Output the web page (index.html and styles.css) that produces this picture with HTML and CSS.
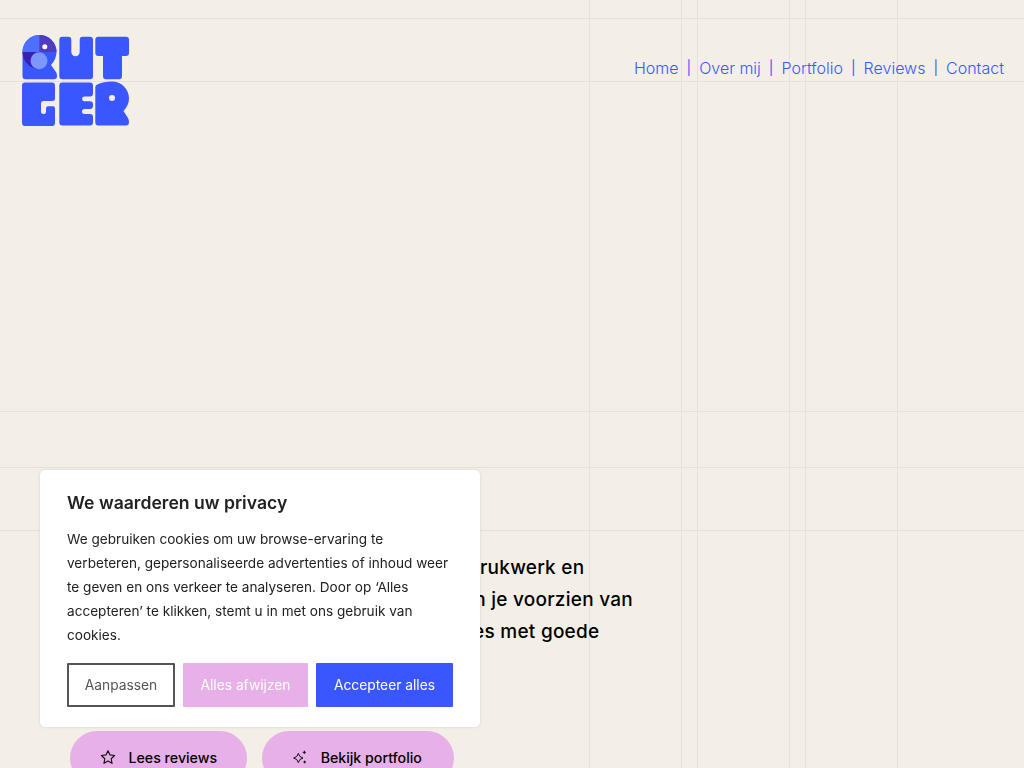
FILE: index.html
```html
<!DOCTYPE html>
<html lang="nl">
<head>
    <meta charset="UTF-8">
    <meta name="viewport" content="width=device-width, initial-scale=1.0">
    <title>Rutger</title>
    <link rel="stylesheet" href="styles.css">
</head>
<body>
    <!-- grid lines behind the page -->
    <svg class="grid-lines" width="1024" height="768" viewBox="0 0 1024 768">
        <path d="M589.5 0V768M681.5 0V768M697.5 0V768M789.5 0V768M805.5 0V768M897.5 0V768M0 18.5H1024M0 81.5H1024M0 411.5H1024M0 467.5H1024M0 530.5H1024" stroke="#e6e2da" fill="none"/>
    </svg>

    <header class="site-header">
        <a class="logo" href="#" aria-label="Rutger">
            <svg width="108" height="91" viewBox="22 35 108 91">
                <g fill="#3a57ff">
                    <path d="M22.500 52a17 17 0 0 1 34 0q0 7-5.500 13l5 7q1 2 1 4 0 3.300-3 3.300H25.500q-3 0-3-3z"/>
                    <path d="M62.300 36.700h6q3 0 3 3V52a4.200 4.200 0 0 0 8.400 0V39.700q0-3 3-3h7.300q3 0 3 3v36.600q0 3-3 3H62.300q-3 0-3-3V39.700q0-3 3-3z"/>
                    <path d="M98.300 36.700H126q3 0 3 3V53q0 3-3 3h-4v20.300q0 3-3 3h-13q-3 0-3-3V56h-4.700q-3 0-3-3V39.700q0-3 3-3z"/>
                    <path d="M25 82.500h27q3 0 3 3V98.500q0 2.500-3 2.500H43.500q-2.500 0-2.500 2.500v8a2.500 2.500 0 0 0 5 0v-3q0-2.200 2-2.200h5q2 0 2 2.200v14.600q0 3-3 3H25q-3 0-3-3V85.500q0-3 3-3z"/>
                    <path d="M62.300 82.500H90q3 0 3 3v8q0 3-3 3h-5.500a2.400 2.400 0 0 0 0 4.800H90q3 0 3 3v1.700q0 3-3 3h-5.500a2.500 2.500 0 0 0 0 5H90q3 0 3 3v5.600q0 3-3 3H62.300q-3 0-3-3V85.500q0-3 3-3z"/>
                    <path d="M98.300 84q5-2.500 13.700-2.500a17 17 0 0 1 17 17q0 6.500-5.500 12.500l4.500 7q1 2 1 4 0 3.600-3 3.600H98.300q-3 0-3-3V87q0-2 3-3z"/>
                </g>
                <path d="M39.500 35a17 17 0 0 0-17 17h17z" fill="#4d70ff"/>
                <path d="M39.500 35a17 17 0 0 1 17 17h-17z" fill="#4f3bc4"/>
                <path d="M22.500 52h17v17a17 17 0 0 1-17-17z" fill="#3b1fb5"/>
                <circle cx="39" cy="60.800" r="8.500" fill="#7d97ff"/>
                <circle cx="44.800" cy="46.700" r="2.500" fill="#fff"/>
                <circle cx="112" cy="98" r="3" fill="#f3efe7"/>
            </svg>
        </a>
        <nav class="main-nav">
            <a href="#">Home</a><span>|</span>
            <a href="#">Over mij</a><span>|</span>
            <a href="#">Portfolio</a><span>|</span>
            <a href="#">Reviews</a><span>|</span>
            <a href="#">Contact</a>
        </nav>
    </header>

    <main class="hero">
        <p class="hero-text">Ik maak logo's, huisstijlen, flyers, of ander drukwerk en<br>websites. Verder denk ik met jou mee en kan je voorzien van<br>teksten en vette ideeën voor nieuwe websites met goede</p>
        <div class="hero-buttons">
            <a class="pill" href="#">
                <svg width="16" height="16" viewBox="0 0 24 24" fill="none" stroke="#111" stroke-width="1.700" stroke-linejoin="round"><path d="M12 2.500l3 6.400 6.900.9-5.100 4.800 1.300 6.900-6.100-3.400-6.100 3.400 1.300-6.900-5.100-4.800 6.900-.9z"/></svg>
                Lees reviews
            </a>
            <a class="pill pill-portfolio" href="#">
                <svg width="16" height="16" viewBox="0 0 24 24" fill="none" stroke="#111" stroke-width="1.500" stroke-linejoin="round"><path d="M9.500 6.500l2.300 4.700 4.700 2.300-4.700 2.300-2.300 4.700-2.300-4.700-4.700-2.300 4.700-2.300z"/><path d="M18.500 2.500v5M16 5h5M19 17.500v4M17 19.500h4"/></svg>
                Bekijk portfolio
            </a>
        </div>
    </main>

    <div class="cookie-box">
        <h2>We waarderen uw privacy</h2>
        <p>We gebruiken cookies om uw browse-ervaring te verbeteren, gepersonaliseerde advertenties of inhoud weer te geven en ons verkeer te analyseren. Door op ‘Alles accepteren’ te klikken, stemt u in met ons gebruik van cookies.</p>
        <div class="cookie-actions">
            <button class="btn-outline" type="button">Aanpassen</button>
            <button class="btn-pink" type="button">Alles afwijzen</button>
            <button class="btn-blue" type="button">Accepteer alles</button>
        </div>
    </div>
</body>
</html>
```

FILE: styles.css
```css
* {
    box-sizing: border-box;
}

html, body {
    height: 100%;
    overflow: hidden;
}

body {
    margin: 0;
    background-color: #f3efe7;
    font-family: "Inter", "Liberation Sans", sans-serif;
    color: #000;
}

a {
    text-decoration: none;
}

.grid-lines {
    position: absolute;
    top: 0;
    left: 0;
}

.site-header {
    position: relative;
    display: flex;
    justify-content: space-between;
    align-items: flex-start;
    padding: 35px 20px 0 22px;
}

.logo {
    display: block;
    height: 91px;
}

.logo svg {
    display: block;
}

.main-nav {
    display: flex;
    gap: 7.5px;
    margin-top: 21px;
    font-size: 16px;
    font-weight: 350;
    line-height: 24px;
    color: #3a57ff;
}

.main-nav a {
    color: #3a57ff;
}

.main-nav span {
    font-size: 14px;
    font-weight: 400;
    padding: 0 0.5px;
}

.hero {
    position: relative;
    padding: 426px 0 0 70px;
}

.hero-text {
    margin: 0;
    font-size: 19px;
    font-weight: 500;
    line-height: 32px;
    letter-spacing: 0.25px;
}

.hero-buttons {
    display: flex;
    gap: 15px;
    margin-top: 83px;
}

.pill {
    display: flex;
    align-items: center;
    gap: 13px;
    height: 54px;
    padding: 0 29.5px 2px;
    border-radius: 27px;
    background-color: #e7b0e8;
    color: #000;
    font-size: 14.2px;
    font-weight: 500;
}

.pill-portfolio {
    padding: 0 32px 2px 30px;
}

.cookie-box {
    position: fixed;
    left: 40px;
    top: 470px;
    width: 440px;
    height: 257px;
    padding: 22px 27px;
    background-color: #fff;
    border-radius: 5px;
    box-shadow: 0 0 3px rgba(0, 0, 0, 0.12);
    color: #212121;
}

.cookie-box h2 {
    margin: 0;
    font-size: 17.6px;
    font-weight: 600;
    line-height: 22px;
}

.cookie-box p {
    margin: 13px 0 0;
    font-size: 13.6px;
    line-height: 24px;
}

.cookie-actions {
    display: flex;
    gap: 8px;
    margin-top: 16px;
}

.cookie-actions button {
    height: 44px;
    border-radius: 1px;
    border: 2px solid transparent;
    font-family: inherit;
    font-size: 13.8px;
    cursor: pointer;
}

.cookie-actions .btn-outline {
    width: 108px;
    background-color: #fff;
    border-color: #555;
    color: #555;
}

.btn-pink {
    width: 125px;
    background-color: #e7b0e8;
    color: #fff;
}

.btn-blue {
    width: 137px;
    background-color: #3a57ff;
    color: #fff;
}
```
